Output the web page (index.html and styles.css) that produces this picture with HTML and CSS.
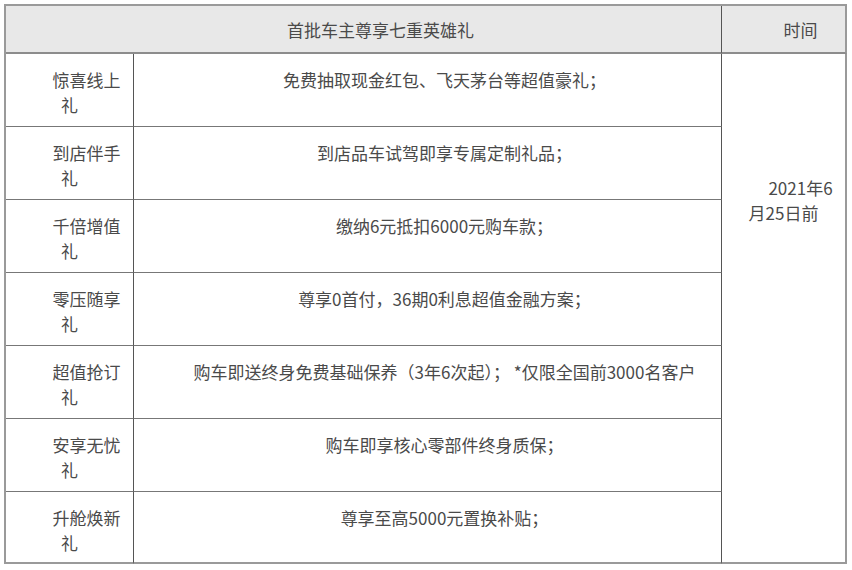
FILE: index.html
```html
<!DOCTYPE html>
<html lang="zh-CN">
<head>
<meta charset="utf-8">
<title>首批车主尊享七重英雄礼</title>
<link rel="stylesheet" href="styles.css">
</head>
<body>
<div class="wrap">
<table class="gift-table">
  <colgroup>
    <col class="c-name">
    <col class="c-desc">
    <col class="c-time">
  </colgroup>
  <thead>
    <tr class="head-row">
      <th colspan="2" class="cell">首批车主尊享七重英雄礼</th>
      <th class="cell last-col">时间</th>
    </tr>
  </thead>
  <tbody>
    <tr class="row">
      <td class="cell name">惊喜线上礼</td>
      <td class="cell desc">免费抽取现金红包、飞天茅台等超值豪礼；</td>
      <td class="cell last-col time" rowspan="7">2021年6月25日前</td>
    </tr>
    <tr class="row">
      <td class="cell name">到店伴手礼</td>
      <td class="cell desc">到店品车试驾即享专属定制礼品；</td>
    </tr>
    <tr class="row">
      <td class="cell name">千倍增值礼</td>
      <td class="cell desc">缴纳6元抵扣6000元购车款；</td>
    </tr>
    <tr class="row">
      <td class="cell name">零压随享礼</td>
      <td class="cell desc">尊享0首付，36期0利息超值金融方案；</td>
    </tr>
    <tr class="row">
      <td class="cell name">超值抢订礼</td>
      <td class="cell desc">购车即送终身免费基础保养（3年6次起）； *仅限全国前3000名客户</td>
    </tr>
    <tr class="row">
      <td class="cell name">安享无忧礼</td>
      <td class="cell desc">购车即享核心零部件终身质保；</td>
    </tr>
    <tr class="row last-row">
      <td class="cell name">升舱焕新礼</td>
      <td class="cell desc">尊享至高5000元置换补贴；</td>
    </tr>
  </tbody>
</table>
</div>
</body>
</html>
```

FILE: styles.css
```css
html, body {
  margin: 0;
  padding: 0;
  background: #ffffff;
}

.wrap {
  padding: 4px 0 0 4px;
}

.gift-table {
  border-collapse: separate;
  border-spacing: 0;
  table-layout: fixed;
  width: 841px;
  border-top: 2px solid #9a9a9a;
  border-left: 2px solid #9a9a9a;
  font-family: "Noto Sans CJK SC", "Noto Sans", sans-serif;
  font-size: 17px;
  line-height: 25px;
  color: #4a4a4a;
}

.c-name { width: 128px; }
.c-desc { width: 588px; }
.c-time { width: 125px; }

.cell {
  border-right: 1px solid #555;
  border-bottom: 1px solid #777;
  padding: 13px 8px 0 8px;
  text-align: center;
  text-indent: 2em;
  vertical-align: top;
  font-weight: normal;
  box-sizing: border-box;
}

.head-row {
  height: 48px;
}

.head-row .cell {
  background: #e8e8e8;
  padding-top: 11px;
  border-bottom: 2px solid #8c8c8c;
}

.row {
  height: 73px;
}

.last-row {
  height: 72px;
}

.last-row .cell {
  border-bottom: 2px solid #9a9a9a;
}

.last-col {
  border-right: 2px solid #9a9a9a;
}

.time {
  padding-top: 121px;
  border-bottom: 2px solid #9a9a9a;
}
```
